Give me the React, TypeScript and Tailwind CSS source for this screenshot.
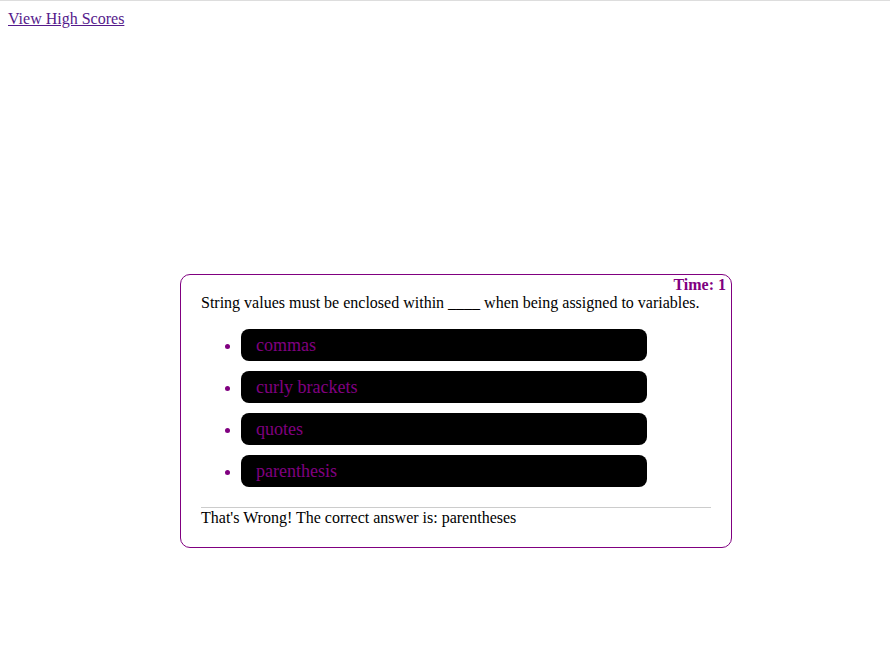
const answers = ["commas", "curly brackets", "quotes", "parenthesis"];

export default function App() {
  return (
    <div className="min-h-[657px] border-t border-[#dddddd] bg-white font-['Liberation_Serif',serif] text-base text-black">
      <div className="pl-2 pt-1.5">
        <a href="#" className="text-[#551a8b] underline">
          View High Scores
        </a>
      </div>
      <div className="ml-[180px] mt-[243px] w-[552px] rounded-[10px] border border-[#800080] pb-5">
        <div className="pr-[5px] text-right font-bold leading-[18px] text-[#800080] pt-[1px]">Time: 1</div>
        <div className="px-5">
          <p className="leading-[18px]">
            String values must be enclosed within ____ when being assigned to variables.
          </p>
          <ul className="mt-[17px] flex list-disc flex-col gap-[10px] pl-10 text-[#800080]">
            {answers.map((a) => (
              <li key={a}>
                <button className="h-8 w-[406px] rounded-lg bg-black px-[15px] text-left text-lg leading-8 text-[#800080]">
                  {a}
                </button>
              </li>
            ))}
          </ul>
          <hr className="mt-5 border-[#cccccc]" />
          <p className="leading-[18px] pt-[1px]">That's Wrong! The correct answer is: parentheses</p>
        </div>
      </div>
    </div>
  );
}
